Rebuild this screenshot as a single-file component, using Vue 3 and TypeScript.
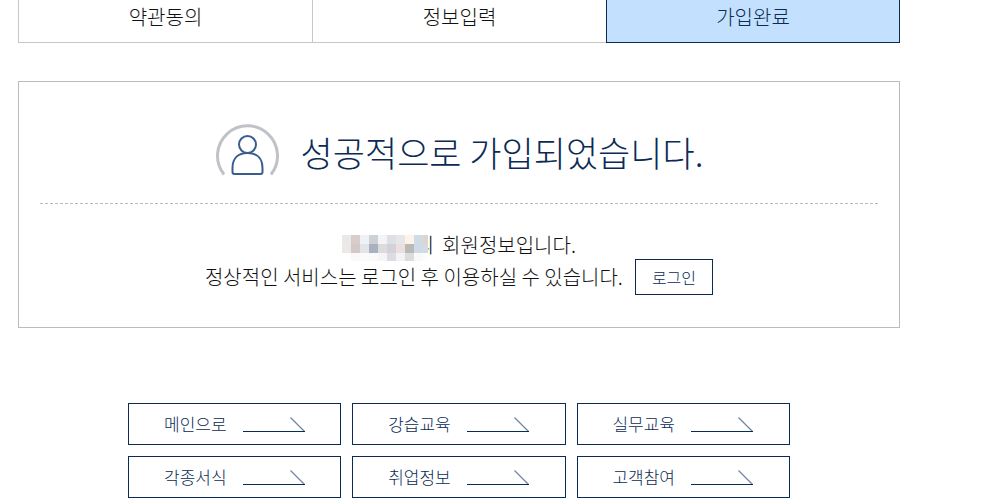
<script setup lang="ts">
interface Step {
  label: string
  active: boolean
}

const steps: Step[] = [
  { label: '약관동의', active: false },
  { label: '정보입력', active: false },
  { label: '가입완료', active: true },
]

const shortcuts: string[] = ['메인으로', '강습교육', '실무교육', '각종서식', '취업정보', '고객참여']

// Each row holds the cell colours of the mask over the member name.
const maskRows: string[][] = [
  ['#eae9e9', '#d9cdcb', '#eef1f6', '#cdd1d6', '#f2f4f8', '#dfe0e6', '#e4e8ea', '#fdf3e6', '#d0dbe6', '#ddd6d0'],
  ['#eae9e8', '#d5c9c8', '#e3e4e8', '#a9b0c0', '#dcdcde', '#d2d2d8', '#ecdfdf', '#b9bab5', '#cfdae5', '#d2dbe5'],
  ['#ffffff', '#fbf8f8', '#fafafb', '#f9f9fb', '#f5f5f8', '#dddde1', '#f3f2f4', '#dcdcdf', '#f9f9fb', '#fdfdfd'],
]
</script>

<template>
  <main class="page">
    <ol class="steps">
      <li v-for="step in steps" :key="step.label" class="step" :class="{ active: step.active }">
        {{ step.label }}
      </li>
    </ol>

    <section class="panel">
      <header class="headline">
        <svg class="avatar" width="64" height="52" viewBox="0 0 64 52" fill="none" aria-hidden="true">
          <path d="M9 50.5 A30 30 0 1 1 56 50.5" stroke="#bfc2c6" stroke-width="3" />
          <circle cx="32.5" cy="20.5" r="8.500" stroke="#395d8e" stroke-width="2" />
          <path d="M17.500 48 V44 C17.500 34 23.500 29 32.500 29 S47.500 34 47.500 44 V48 Q47.500 50 45.500 50 H19.500 Q17.500 50 17.500 48 Z" stroke="#395d8e" stroke-width="2" />
        </svg>
        <h1>성공적으로 가입되었습니다.</h1>
      </header>
      <div class="message">
        <p class="member">
          <span class="masked">
            <span>의</span>
            <svg class="mask" width="86" height="26" viewBox="0 0 86 26" shape-rendering="crispEdges" aria-hidden="true">
              <template v-for="(row, y) in maskRows" :key="y">
                <rect v-for="(color, x) in row" :key="x" :x="x * 9" :y="y * 9" width="9" height="9" :fill="color" />
              </template>
            </svg>
          </span>
          <span>회원정보입니다.</span>
        </p>
        <p class="service">
          <span>정상적인 서비스는 로그인 후 이용하실 수 있습니다.</span>
          <button type="button" class="login">로그인</button>
        </p>
      </div>
    </section>

    <nav class="shortcuts">
      <a v-for="label in shortcuts" :key="label" href="#" class="shortcut">
        <span>{{ label }}</span>
        <svg width="63" height="18" viewBox="0 0 63 18" fill="none" aria-hidden="true">
          <path d="M47.500 2.500 L61.500 16.500" stroke="#72849c" stroke-width="1.300" />
          <path d="M0 16.500 H62" stroke="#0b2b55" />
        </svg>
      </a>
    </nav>
  </main>
</template>

<style>
body {
  margin: 0;
  background: #fff;
}
</style>

<style scoped>
.page {
  margin: 0 99px 0 18px;
  color: #111;
  font-family: "Noto Sans CJK KR", sans-serif;
  font-weight: 300;
}

.steps {
  display: grid;
  grid-template-columns: repeat(3, 1fr);
  margin: 0;
  padding: 0;
  list-style: none;
}

.step {
  padding: 1px 0 9px;
  border: 1px solid #c8c8c8;
  border-width: 0 0 1px 1px;
  font-size: 20px;
  line-height: 32px;
  text-align: center;
}

.step.active {
  border-color: #0b2b55;
  border-right-width: 1px;
  background: #c3e1ff;
  color: #0b2b55;
}

.panel {
  margin-top: 38px;
  padding: 42px 21px 32px;
  border: 1px solid #bbb;
}

.headline {
  display: flex;
  align-items: flex-start;
  justify-content: center;
  gap: 22px;
  padding-bottom: 23px;
  border-bottom: 1px dashed #bbb;
}

.avatar {
  flex: none;
}

h1 {
  margin: 0;
  color: #0b2b55;
  font-size: 35px;
  font-weight: 300;
  line-height: 56px;
}

.message {
  padding-top: 25px;
  font-size: 20px;
  line-height: 32px;
}

.member,
.service {
  display: flex;
  justify-content: center;
  margin: 0;
}

.member {
  gap: 8px;
  height: 30px;
}

.masked {
  position: relative;
  width: 92px;
  text-align: right;
}

.mask {
  position: absolute;
  top: 6px;
  left: 0;
}

.service {
  align-items: center;
  gap: 12px;
}

.login {
  padding: 0 16px;
  border: 1px solid #0b2b55;
  background: #fff;
  color: #0b2b55;
  font-family: inherit;
  font-size: 16px;
  font-weight: 300;
  line-height: 34px;
}

.shortcuts {
  display: grid;
  grid-template-columns: repeat(3, 1fr);
  gap: 11px;
  width: 75%;
  margin: 75px auto 0;
}

.shortcut {
  display: flex;
  align-items: center;
  justify-content: center;
  gap: 16px;
  border: 1px solid #0b2b55;
  color: #0b2b55;
  font-size: 17px;
  line-height: 40px;
  text-decoration: none;
}
</style>
